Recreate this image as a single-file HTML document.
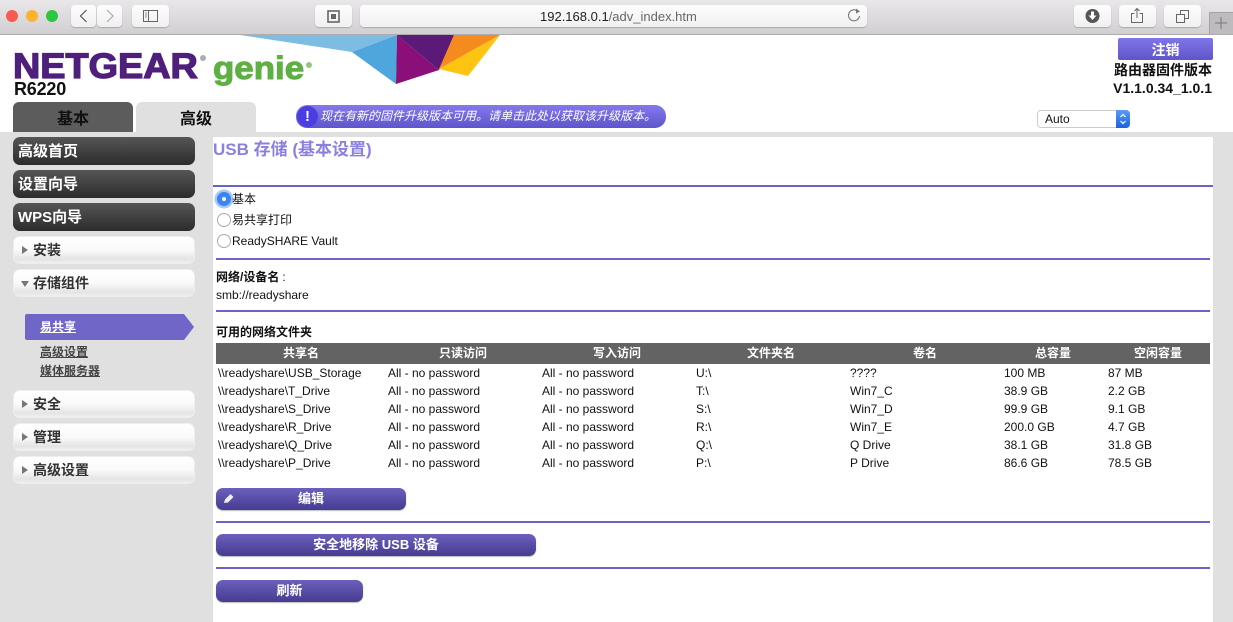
<!DOCTYPE html>
<html><head><meta charset="utf-8"><style>
html,body{margin:0;padding:0}
body{width:1233px;height:622px;overflow:hidden;position:relative;background:#e0e0e0;font-family:"Liberation Sans","Noto Sans CJK SC",sans-serif;color:#111;font-size:12px}
.a,.t{position:absolute;white-space:nowrap}
.t{line-height:16px}
.b{font-weight:bold}
.tb{position:absolute;top:5px;height:22px;background:linear-gradient(#fdfdfd,#f1f0f1);border-radius:4px;box-shadow:0 1px 1px #aaa}
.tb svg{position:absolute;left:0;top:0}
.dk,.lt{position:absolute;left:13px;width:182px;height:28px;border-radius:7px;line-height:29px;font-weight:bold;font-size:15px;box-sizing:border-box}
.dk{background:linear-gradient(#565656,#2c2c2c);color:#fff;padding-left:5px}
.lt{background:linear-gradient(#fff 0,#fafafa 50%,#e4e4e4 85%,#f0f0f0);color:#333;padding-left:19px;font-size:14px;border:1px solid #eee;line-height:26px}
.lt i{position:absolute;left:8px;top:9px;width:0;height:0;border-left:6px solid #777;border-top:4px solid transparent;border-bottom:4px solid transparent}
.lt i.d{left:7px;top:11px;border-top:6px solid #777;border-left:4px solid transparent;border-right:4px solid transparent;border-bottom:0}
.ln{position:absolute;left:216px;width:994px;height:2px;background:#6d62c9}
.r{position:absolute;left:217px;width:12px;height:12px;border:1px solid #aaa;border-radius:50%;background:#fff;margin-top:0}
.h{position:absolute;top:343px;line-height:21px;color:#fff;font-weight:bold;transform:translateX(-50%);white-space:nowrap}
.btn{position:absolute;left:216px;height:22px;border-radius:7px;background:linear-gradient(#6b61bd,#453b90);color:#fff;font-weight:bold;font-size:13px;line-height:22px;text-align:center;box-shadow:0 1px 1px #bbb}
.s{position:absolute;left:40px;color:#444;font-weight:bold;text-decoration:underline;line-height:16px}
</style></head><body>
<!-- toolbar -->
<div class="a" style="left:0;top:0;width:1233px;height:34px;background:linear-gradient(#e9e7e9,#d1cfd1);border-bottom:1px solid #aeacae"></div>
<div class="a" style="left:6px;top:10px;width:12px;height:12px;border-radius:50%;background:#fb5a52"></div>
<div class="a" style="left:26px;top:10px;width:12px;height:12px;border-radius:50%;background:#fbb22e"></div>
<div class="a" style="left:46px;top:10px;width:12px;height:12px;border-radius:50%;background:#2cc640"></div>
<div class="tb" style="left:71px;width:25px"><svg width="25" height="22"><path d="M15.500 5L9.500 11L15.500 17" fill="none" stroke="#555" stroke-width="1.200"/></svg></div>
<div class="tb" style="left:97px;width:25px"><svg width="25" height="22"><path d="M10 5L16 11L10 17" fill="none" stroke="#aaa" stroke-width="1.200"/></svg></div>
<div class="tb" style="left:132px;width:37px"><svg width="37" height="22"><rect x="11.500" y="5.500" width="14" height="11" fill="none" stroke="#666"/><path d="M16.500 5.500V16.500" stroke="#666"/><path d="M13 8h2M13 10h2M13 12h2" stroke="#888"/></svg></div>
<div class="tb" style="left:315px;width:37px"><svg width="37" height="22"><rect x="13" y="6" width="11" height="11" fill="none" stroke="#666" stroke-width="1.600"/><rect x="16" y="9" width="5" height="5" fill="#666"/></svg></div>
<div class="tb" style="left:360px;width:507px"><svg width="507" height="22"><path d="M498 6.500A5.500 5.500 0 1 0 499.500 11" fill="none" stroke="#777" stroke-width="1.100"/><path d="M496 3.500L500 6.500L496 8.500Z" fill="#777"/></svg></div>
<div class="t" style="left:540px;top:9px;font-size:13px;color:#222">192.168.0.1<span style="color:#666">/adv_index.htm</span></div>
<div class="tb" style="left:1074px;width:37px"><svg width="37" height="22"><circle cx="18.500" cy="11" r="7" fill="#555"/><path d="M17 6.500h3v4h2.500l-4 4.500l-4-4.500h2.500z" fill="#fff"/></svg></div>
<div class="tb" style="left:1119px;width:37px"><svg width="37" height="22"><path d="M15.500 8.500H12.500V17.500H23.500V8.500H20.500" fill="none" stroke="#666"/><path d="M18 13V3.500M15.500 6L18 3.500L20.500 6" fill="none" stroke="#666"/></svg></div>
<div class="tb" style="left:1164px;width:37px"><svg width="37" height="22"><rect x="12.500" y="9.500" width="8" height="8" fill="none" stroke="#666"/><path d="M16.500 9V5.500H24.500V13.500H21" fill="none" stroke="#666"/></svg></div>
<div class="a" style="left:1209px;top:12px;width:24px;height:22px;background:#bdbbbd;box-shadow:inset 1px 1px 0 #a5a3a5"><svg width="24" height="22" style="position:absolute;left:0;top:0"><path d="M12 5V17M6 11H18" stroke="#777" stroke-width="1"/></svg></div>
<!-- header -->
<div class="a" style="left:0;top:35px;width:1233px;height:97px;background:#fff"></div>
<svg class="a" style="left:0;top:35px" width="600" height="60" viewBox="0 35 600 60">
<polygon points="240,35 397,35 352,52" fill="#7dbde1"/>
<polygon points="352,52 397,35 396,84" fill="#4ea6dc"/>
<polygon points="397,35 439,70 396,84" fill="#8a0f78"/>
<polygon points="397,35 454,35 439,70" fill="#5b1a78"/>
<polygon points="454,35 500,35 439,69" fill="#f58b1f"/>
<polygon points="439,69 500,35 468,76" fill="#fdc412"/>
</svg>
<div class="a b" style="left:13px;top:47px;font-size:35px;line-height:40px;color:#4f1f7c;transform:scaleX(1.08);transform-origin:0 0;-webkit-text-stroke:1.300px #4f1f7c">NETGEAR</div>
<div class="a" style="left:200px;top:55px;width:6px;height:6px;border-radius:50%;background:#a8aeb8"></div>
<div class="a b" style="left:213px;top:48px;font-size:32px;line-height:40px;color:#5eb045;transform:scaleX(1.09);transform-origin:0 0;-webkit-text-stroke:1px #5eb045">genie</div>
<div class="a" style="left:306px;top:62px;width:6px;height:6px;border-radius:50%;background:#8fc97c"></div>
<div class="a b" style="left:14px;top:79px;font-size:18px;line-height:20px;letter-spacing:-.2px;color:#111">R6220</div>
<div class="a b" style="left:13px;top:102px;width:120px;height:30px;background:#5c5c5c;border-radius:6px 6px 0 0;text-align:center;font-size:16px;line-height:36px;color:#111;overflow:hidden">基本</div>
<div class="a b" style="left:136px;top:102px;width:120px;height:30px;background:#e0e0e0;border-radius:6px 6px 0 0;text-align:center;font-size:16px;line-height:36px;color:#111;overflow:hidden">高级</div>
<div class="a" style="left:296px;top:105px;width:370px;height:23px;border-radius:11px;background:linear-gradient(#8479ec,#5f55cc)"></div>
<div class="a b" style="left:297px;top:106px;width:21px;height:21px;border-radius:50%;background:#4a3ee0;color:#fff;text-align:center;font-size:15px;line-height:21px">!</div>
<div class="t" style="left:320px;top:108px;color:#fff;font-size:12px;font-style:italic">现在有新的固件升级版本可用。请单击此处以获取该升级版本。</div>
<div class="a b" style="left:1118px;top:38px;width:95px;height:22px;border-radius:2px;background:linear-gradient(#8076ea,#5f55c8);color:#fff;text-align:center;font-size:14px;line-height:24px">注销</div>
<div class="a b" style="right:21px;top:61px;font-size:14px;line-height:18px;color:#111">路由器固件版本</div>
<div class="a b" style="right:21px;top:79px;font-size:14px;line-height:18px;color:#111">V1.1.0.34_1.0.1</div>
<div class="a" style="left:1037px;top:110px;width:93px;height:18px;box-sizing:border-box;border:1px solid #ccc;border-radius:4px;background:#fff;line-height:17px;padding-left:7px;font-size:12px">Auto</div>
<div class="a" style="left:1116px;top:110px;width:14px;height:18px;border-radius:0 4px 4px 0;background:linear-gradient(#5a9cf5,#1a62e0)"><svg width="14" height="18"><path d="M4.500 7L7 4.500L9.500 7M4.500 11L7 13.500L9.500 11" fill="none" stroke="#fff" stroke-width="1.200"/></svg></div>
<!-- sidebar -->
<div class="dk" style="top:137px">高级首页</div>
<div class="dk" style="top:170px">设置向导</div>
<div class="dk" style="top:203px">WPS向导</div>
<div class="lt" style="top:236px"><i></i>安装</div>
<div class="lt" style="top:269px"><i class="d"></i>存储组件</div>
<svg class="a" style="left:25px;top:314px" width="170" height="26"><path d="M2 0H159L169 13L159 26H2Q0 26 0 24V2Q0 0 2 0Z" fill="#7066c8"/></svg>
<div class="t b" style="left:40px;top:319px;color:#fff;text-decoration:underline">易共享</div>
<div class="s" style="top:344px">高级设置</div>
<div class="s" style="top:363px">媒体服务器</div>
<div class="lt" style="top:390px"><i></i>安全</div>
<div class="lt" style="top:423px"><i></i>管理</div>
<div class="lt" style="top:456px"><i></i>高级设置</div>
<!-- content -->
<div class="a" style="left:213px;top:137px;width:1000px;height:485px;background:#fff"></div>
<div class="a b" style="left:213px;top:139px;font-size:17px;line-height:21px;color:#8a80e0">USB 存储 (基本设置)</div>
<div class="a" style="left:213px;top:185px;width:1000px;height:2px;background:#6d62c9"></div>
<div class="r" style="top:192px;background:#3a84f5;border-color:#3a84f5;box-shadow:0 0 0 2.500px #a9c9f8"></div>
<div class="a" style="left:222px;top:197px;width:4px;height:4px;border-radius:50%;background:#fff"></div>
<div class="r" style="top:213px"></div>
<div class="r" style="top:234px"></div>
<div class="t" style="left:232px;top:191px">基本</div>
<div class="t" style="left:232px;top:212px">易共享打印</div>
<div class="t" style="left:232px;top:233px">ReadySHARE Vault</div>
<div class="ln" style="top:258px"></div>
<div class="t b" style="left:216px;top:269px">网络/设备名<span style="font-weight:normal;margin-left:3px">:</span></div>
<div class="t" style="left:216px;top:287px">smb://readyshare</div>
<div class="ln" style="top:310px"></div>
<div class="t b" style="left:216px;top:324px">可用的网络文件夹</div>
<div class="a" style="left:216px;top:343px;width:994px;height:21px;background:#636363"></div>
<div class="h" style="left:301px">共享名</div>
<div class="h" style="left:463px">只读访问</div>
<div class="h" style="left:617px">写入访问</div>
<div class="h" style="left:771px">文件夹名</div>
<div class="h" style="left:925px">卷名</div>
<div class="h" style="left:1053px">总容量</div>
<div class="h" style="left:1158px">空闲容量</div>

<div class="t" style="left:218px;top:365px">\\readyshare\USB_Storage</div><div class="t" style="left:388px;top:365px">All - no password</div><div class="t" style="left:542px;top:365px">All - no password</div><div class="t" style="left:696px;top:365px">U:\</div><div class="t" style="left:850px;top:365px">????</div><div class="t" style="left:1004px;top:365px">100 MB</div><div class="t" style="left:1108px;top:365px">87 MB</div>
<div class="t" style="left:218px;top:383px">\\readyshare\T_Drive</div><div class="t" style="left:388px;top:383px">All - no password</div><div class="t" style="left:542px;top:383px">All - no password</div><div class="t" style="left:696px;top:383px">T:\</div><div class="t" style="left:850px;top:383px">Win7_C</div><div class="t" style="left:1004px;top:383px">38.9 GB</div><div class="t" style="left:1108px;top:383px">2.2 GB</div>
<div class="t" style="left:218px;top:401px">\\readyshare\S_Drive</div><div class="t" style="left:388px;top:401px">All - no password</div><div class="t" style="left:542px;top:401px">All - no password</div><div class="t" style="left:696px;top:401px">S:\</div><div class="t" style="left:850px;top:401px">Win7_D</div><div class="t" style="left:1004px;top:401px">99.9 GB</div><div class="t" style="left:1108px;top:401px">9.1 GB</div>
<div class="t" style="left:218px;top:419px">\\readyshare\R_Drive</div><div class="t" style="left:388px;top:419px">All - no password</div><div class="t" style="left:542px;top:419px">All - no password</div><div class="t" style="left:696px;top:419px">R:\</div><div class="t" style="left:850px;top:419px">Win7_E</div><div class="t" style="left:1004px;top:419px">200.0 GB</div><div class="t" style="left:1108px;top:419px">4.7 GB</div>
<div class="t" style="left:218px;top:437px">\\readyshare\Q_Drive</div><div class="t" style="left:388px;top:437px">All - no password</div><div class="t" style="left:542px;top:437px">All - no password</div><div class="t" style="left:696px;top:437px">Q:\</div><div class="t" style="left:850px;top:437px">Q Drive</div><div class="t" style="left:1004px;top:437px">38.1 GB</div><div class="t" style="left:1108px;top:437px">31.8 GB</div>
<div class="t" style="left:218px;top:455px">\\readyshare\P_Drive</div><div class="t" style="left:388px;top:455px">All - no password</div><div class="t" style="left:542px;top:455px">All - no password</div><div class="t" style="left:696px;top:455px">P:\</div><div class="t" style="left:850px;top:455px">P Drive</div><div class="t" style="left:1004px;top:455px">86.6 GB</div><div class="t" style="left:1108px;top:455px">78.5 GB</div>

<div class="btn" style="top:488px;width:190px">编辑</div>
<svg class="a" style="left:222px;top:492px" width="14" height="14"><path d="M2 11L3 7.500L8.500 2L11.500 5L6 10.500Z" fill="#eee"/></svg>
<div class="ln" style="top:521px"></div>
<div class="btn" style="top:534px;width:320px">安全地移除 USB 设备</div>
<div class="ln" style="top:567px"></div>
<div class="btn" style="top:580px;width:147px">刷新</div>
</body></html>
